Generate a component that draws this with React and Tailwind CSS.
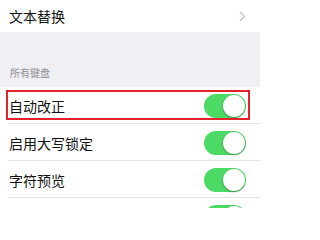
import React from 'react';

const font = { fontFamily: '"Noto Sans CJK SC", "Noto Sans", sans-serif' };

const Toggle = () => (
  <div className="relative h-[24px] w-[42px] rounded-full bg-[#4cd964]">
    <div className="absolute right-[1px] top-[1px] h-[22px] w-[22px] rounded-full bg-white shadow-[0_1px_2px_rgba(0,0,0,0.35)]" />
  </div>
);

const Row = ({ label, boxed, last }) => (
  <div className="relative flex h-[37px] items-center bg-white">
    <div className="flex flex-1 items-center justify-between pl-[9px] pr-[14px]">
      <span className="text-[14px] leading-none text-[#111]">{label}</span>
      <Toggle />
    </div>
    {!last && <div className="absolute bottom-0 left-[8px] right-0 h-px bg-[#e2e2e6]" />}
    {boxed && (
      <div className="pointer-events-none absolute left-[6px] right-[10px] top-[3px] bottom-[4px] border-2 border-[#e3222b]" />
    )}
  </div>
);

export default function App() {
  return (
    <div className="h-[208px] w-[260px] overflow-hidden bg-white" style={font}>
      <div className="flex h-[32px] items-center justify-between bg-white pl-[9px] pr-[14px]">
        <span className="text-[14px] leading-none text-[#111]">文本替换</span>
        <svg width="7" height="11" viewBox="0 0 7 11" fill="none">
          <path d="M1 1l4.5 4.5L1 10" stroke="#c7c7cc" strokeWidth="1.5" />
        </svg>
      </div>
      <div className="flex h-[55px] items-end bg-[#efeff4] pb-[7px] pl-[10px]">
        <span className="text-[10px] leading-[14px] text-[#8e8e93]">所有键盘</span>
      </div>
      <Row label="自动改正" boxed />
      <Row label="启用大写锁定" />
      <Row label="字符预览" />
      <Row label="" last />
    </div>
  );
}
